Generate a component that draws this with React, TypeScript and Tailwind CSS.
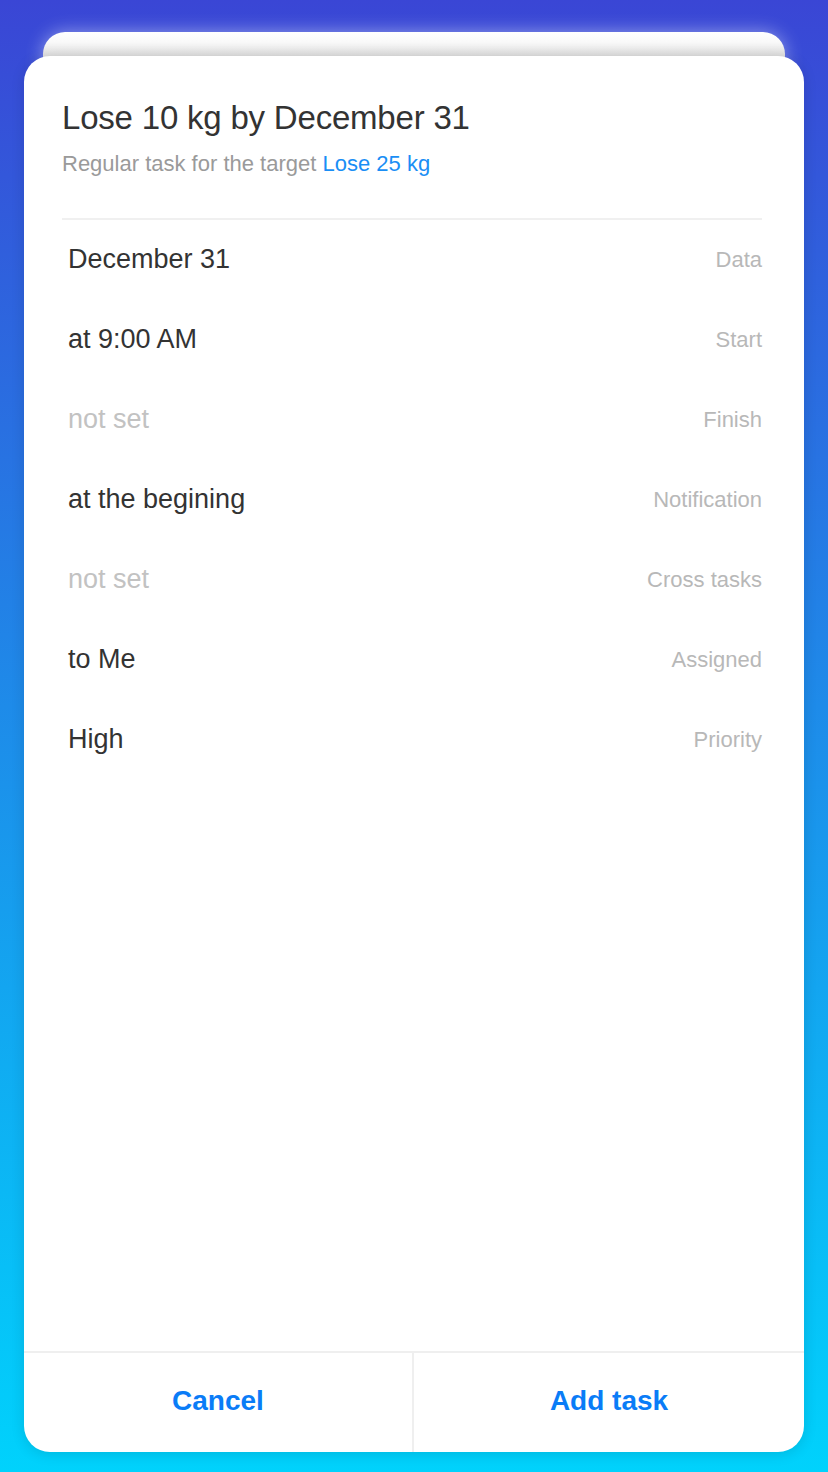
import React from "react";

const rows: { value: string; label: string; muted?: boolean }[] = [
  { value: "December 31", label: "Data" },
  { value: "at 9:00 AM", label: "Start" },
  { value: "not set", label: "Finish", muted: true },
  { value: "at the begining", label: "Notification" },
  { value: "not set", label: "Cross tasks", muted: true },
  { value: "to Me", label: "Assigned" },
  { value: "High", label: "Priority" },
];

export default function App() {
  return (
    <div
      className="min-h-[1472px] w-full overflow-hidden bg-[linear-gradient(to_bottom,#3a46d5_0%,#1e8be9_48%,#00d2fc_100%)] pt-[32px]"
      style={{ fontFamily: '"Liberation Sans", Arial, sans-serif' }}
    >
      <div className="mx-[43px] h-[60px] rounded-t-[22px] bg-[linear-gradient(to_bottom,#ffffff_0px,#f9f9f9_10px,#dcdcdc_24px)] shadow-[0_0_18px_rgba(255,255,255,0.45)]" />
      <div className="relative z-10 mx-[24px] -mt-[36px] flex h-[1396px] flex-col rounded-[26px] bg-white shadow-[0_2px_14px_rgba(0,0,0,0.12)]">
        <div className="flex-1 pl-[38px] pr-[42px] pt-[42px]">
          <h1 className="text-[33px] leading-[40px] tracking-[-0.2px] text-[#333333]">
            Lose 10 kg by December 31
          </h1>
          <p className="mt-[12px] text-[22px] leading-[28px] text-[#9a9a9a]">
            Regular task for the target{" "}
            <span className="text-[#1a8ef5]">Lose 25 kg</span>
          </p>
          <div className="mt-[40px] h-[2px] bg-[#f0f0f0]" />
          <div className="flex flex-col">
            {rows.map((r) => (
              <div
                key={r.label}
                className="flex h-[80px] items-center justify-between pl-[6px]"
              >
                <span
                  className={
                    r.muted
                      ? "pb-[2px] text-[27px] leading-[32px] text-[#c2c2c2]"
                      : "pb-[2px] text-[27px] leading-[32px] text-[#333333]"
                  }
                >
                  {r.value}
                </span>
                <span className="text-[22px] leading-[28px] text-[#b8b8b8]">
                  {r.label}
                </span>
              </div>
            ))}
          </div>
        </div>
        <div className="grid h-[101px] grid-cols-2 border-t-2 border-[#efefef]">
          <button className="flex items-center justify-center border-r-2 border-[#efefef] pb-[4px] text-[28px] font-bold text-[#0a7cf7]">
            Cancel
          </button>
          <button className="flex items-center justify-center pb-[4px] text-[28px] font-bold text-[#0a7cf7]">
            Add task
          </button>
        </div>
      </div>
    </div>
  );
}
